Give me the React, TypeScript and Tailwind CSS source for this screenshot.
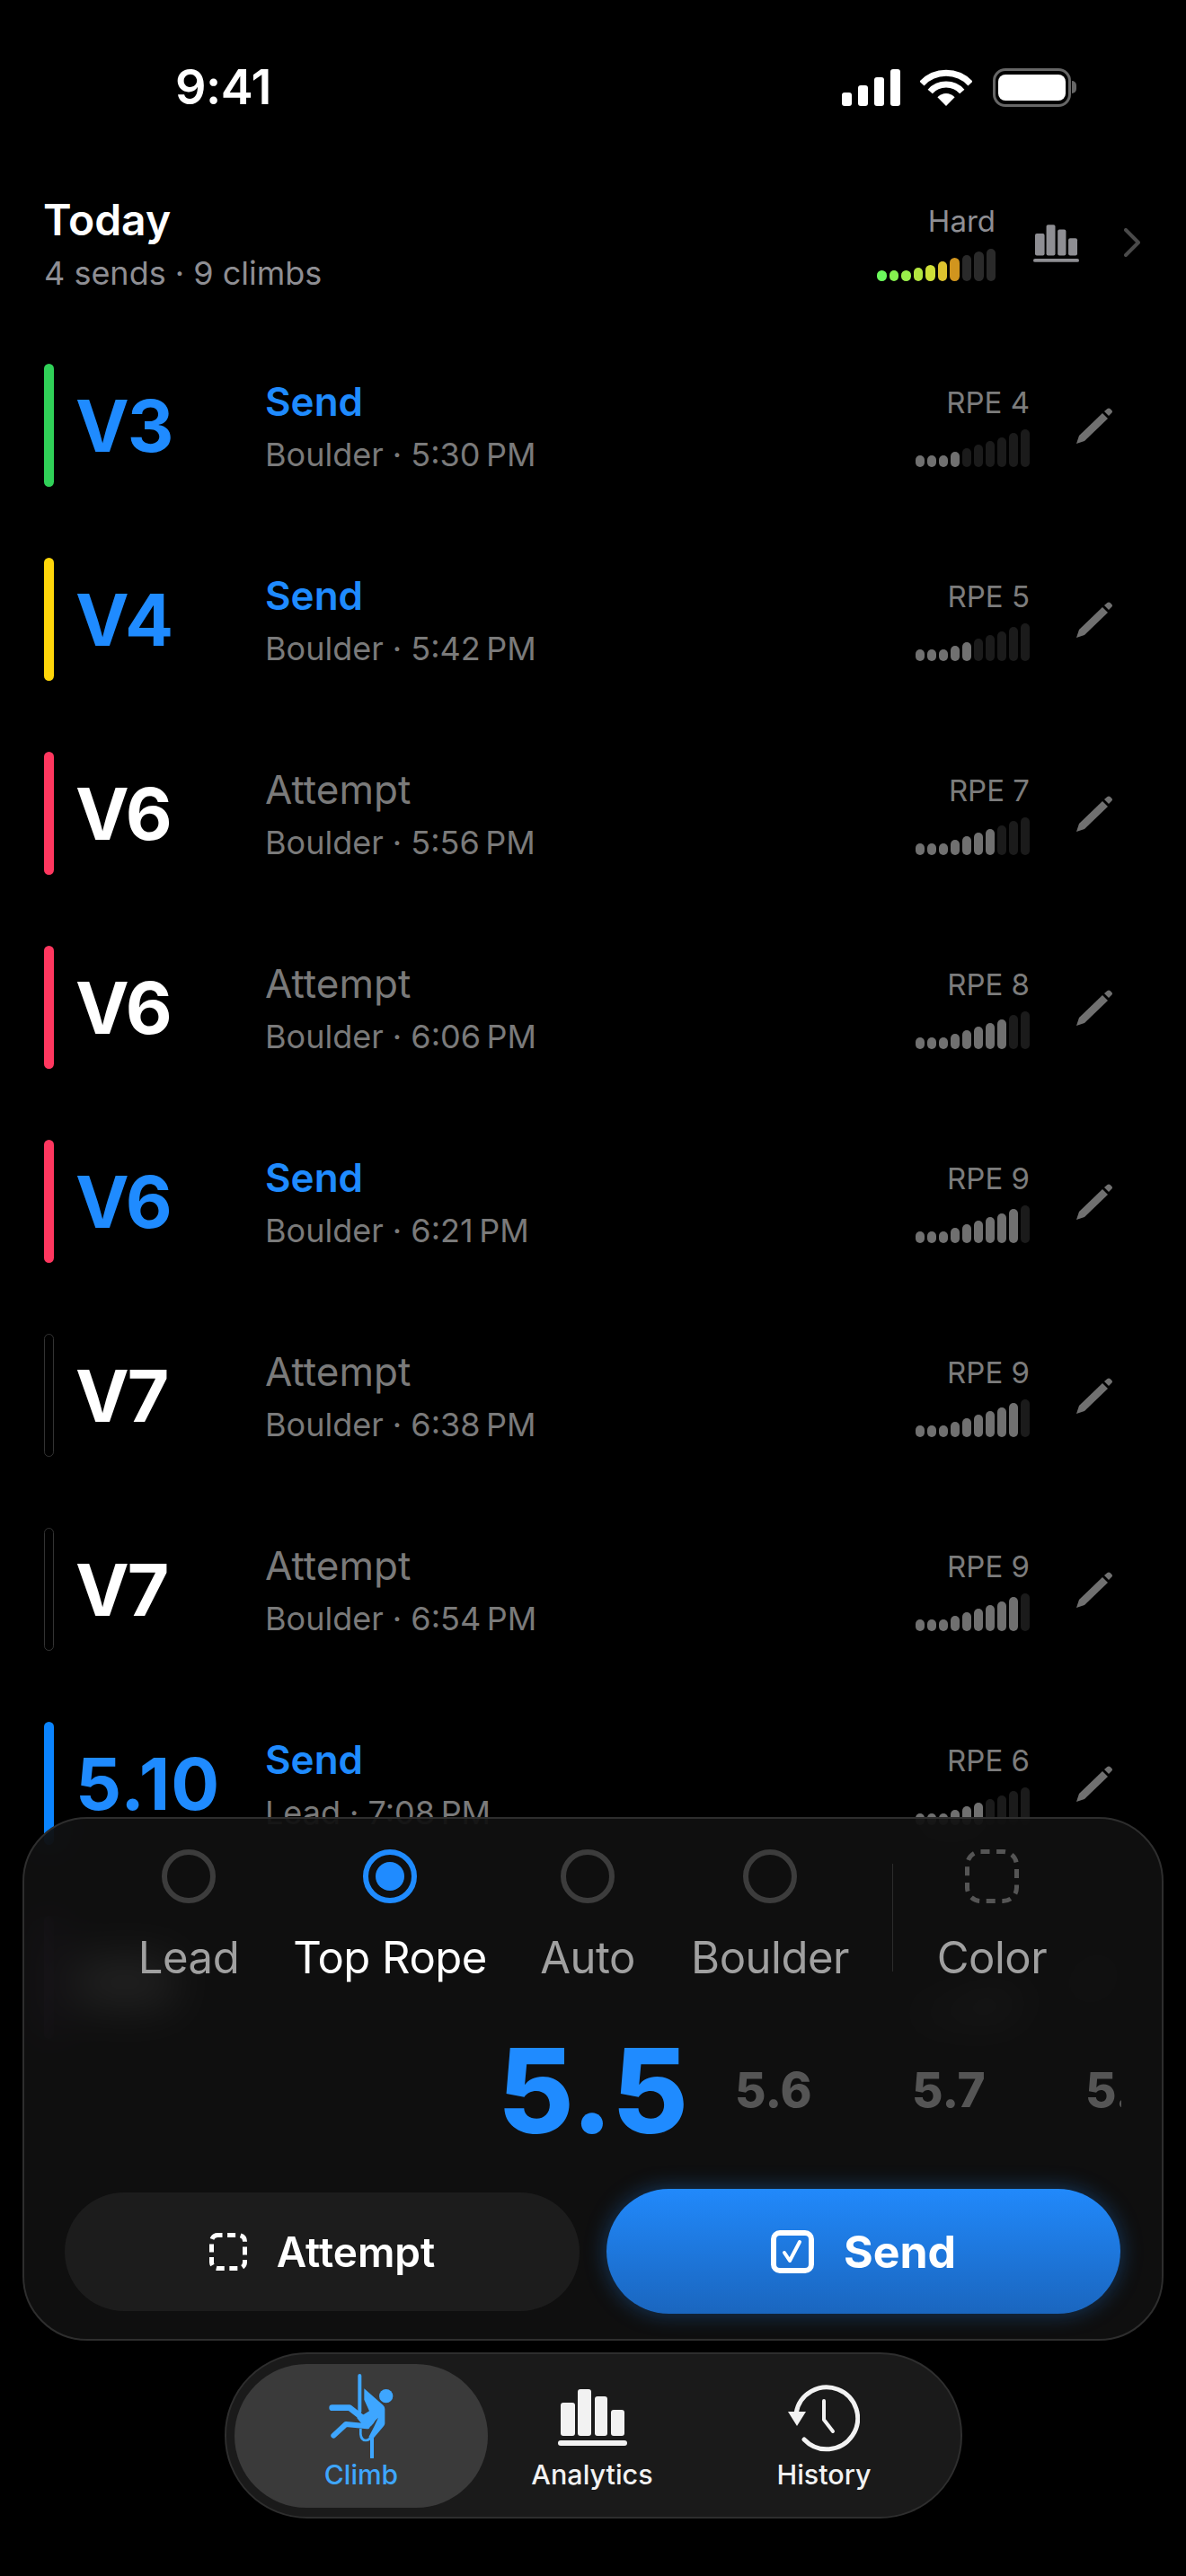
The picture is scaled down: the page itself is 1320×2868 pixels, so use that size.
import React from "react";

const heights = [13, 13, 13, 17, 21, 25, 29, 33, 38, 42];
const headerH = [12, 12, 12, 15, 18, 22, 26, 29, 33, 36];
const headerC = ["#6cf95c", "#86f14e", "#9aee4a", "#b3e63f", "#cfdf38", "#dcc22e", "#d1951e", "#2a2a2a", "#2a2a2a", "#2a2a2a"];

type Climb = { bar: string; grade: string; result: string; sub: string; rpe: number; outlined?: boolean };
const NB = "\u202F";
const climbs: Climb[] = [
  { bar: "bg-[#30d158]", grade: "V3", result: "Send", sub: `Boulder · 5:30${NB}PM`, rpe: 4 },
  { bar: "bg-[#ffd60a]", grade: "V4", result: "Send", sub: `Boulder · 5:42${NB}PM`, rpe: 5 },
  { bar: "bg-[#ff375f]", grade: "V6", result: "Attempt", sub: `Boulder · 5:56${NB}PM`, rpe: 7 },
  { bar: "bg-[#ff375f]", grade: "V6", result: "Attempt", sub: `Boulder · 6:06${NB}PM`, rpe: 8 },
  { bar: "bg-[#ff375f]", grade: "V6", result: "Send", sub: `Boulder · 6:21${NB}PM`, rpe: 9 },
  { bar: "bg-black", grade: "V7", result: "Attempt", sub: `Boulder · 6:38${NB}PM`, rpe: 9, outlined: true },
  { bar: "bg-black", grade: "V7", result: "Attempt", sub: `Boulder · 6:54${NB}PM`, rpe: 9, outlined: true },
  { bar: "bg-[#0a84ff]", grade: "5.10", result: "Send", sub: `Lead · 7:08${NB}PM`, rpe: 6 },
];

function Pencil() {
  return (
    <svg width="40" height="40" viewBox="0 0 40 40" className="shrink-0 text-[#707070]" fill="currentColor">
      <path d="M0 40 L3 31 L29 6 L35 12 L9 37 Z" />
      <path d="M31 4 L34.5 1 Q36 0 37.5 1 L39.5 3 Q40.5 4.5 39 6 L36 9 Z" />
    </svg>
  );
}

function Meter({ rpe }: { rpe: number }) {
  return (
    <div className="flex items-end gap-[3px]">
      {heights.map((h, i) => (
        <div
          key={i}
          className={`w-[10px] rounded-full ${i < rpe ? "bg-[#707070]" : "bg-[#1b1b1b]"}`}
          style={{ height: h }}
        />
      ))}
    </div>
  );
}

function Row({ c }: { c: Climb }) {
  const send = c.result === "Send";
  const long = c.grade.length > 2;
  return (
    <div className="flex h-[137px] shrink-0 items-center pl-[49px] pr-[82px]">
      <div className={`mr-[24px] h-[137px] w-[11px] shrink-0 rounded-full ${c.bar} ${c.outlined ? "border border-[#333333]" : ""}`} />
      <div className={`w-[211px] shrink-0 text-[80px] font-bold leading-none ${long ? "tracking-[1px]" : "tracking-[-2px]"} ${send ? "text-[#1f8bff]" : "text-white"}`}>
        {c.grade}
      </div>
      <div className="flex flex-1 flex-col gap-[11px] pt-[1px]">
        <div className={`text-[44px] leading-[52px] ${send ? "font-semibold text-[#1f8bff]" : "font-normal text-[#7a7a7a]"}`}>{c.result}</div>
        <div className="text-[36px] leading-[44px] text-[#7a7a7a]">{c.sub}</div>
      </div>
      <div className="flex flex-col items-end gap-[10px]">
        <div className="text-[33px] leading-[40px] text-[#7c7c7c]">RPE {c.rpe}</div>
        <Meter rpe={c.rpe} />
      </div>
      <div className="ml-[52px]">
        <Pencil />
      </div>
    </div>
  );
}

/* The row that sits behind the frosted panel: only its blurred shapes show. */
function GhostRow() {
  return (
    <div className="flex h-[137px] shrink-0 items-center pl-[49px] pr-[82px]">
      <div className="mr-[24px] h-[137px] w-[11px] shrink-0 rounded-full bg-[#7a4a9a]" />
      <div className="w-[211px] shrink-0">
        <div className="mt-[10px] h-[58px] w-[110px] rounded-[12px] bg-[#808080]" />
      </div>
      <div className="flex-1" />
      <div className="mt-[50px]">
        <Meter rpe={8} />
      </div>
      <div className="ml-[52px]">
        <Pencil />
      </div>
    </div>
  );
}

function Radio({ on }: { on?: boolean }) {
  return (
    <div className={`flex h-[60px] w-[60px] items-center justify-center rounded-full border-[6px] ${on ? "border-[#1f8bff]" : "border-[#3c3c3c]"}`}>
      {on && <div className="h-[32px] w-[32px] rounded-full bg-[#1f8bff]" />}
    </div>
  );
}

function TypeOption({ label, w, on }: { label: string; w: string; on?: boolean }) {
  return (
    <div className={`flex shrink-0 flex-col items-center ${w}`}>
      <Radio on={on} />
      <div className={`mt-[33px] whitespace-nowrap text-[49px] leading-[56px] tracking-[-0.5px] ${on ? "text-white" : "text-[#a0a0a0]"}`}>{label}</div>
    </div>
  );
}

function BarsIcon({ className }: { className?: string }) {
  return (
    <svg width="77" height="63" viewBox="0 0 77 63" fill="currentColor" className={className}>
      <rect x="3" y="15" width="16" height="37" rx="3" />
      <rect x="22" y="0" width="15" height="52" rx="3" />
      <rect x="41" y="8" width="14" height="44" rx="3" />
      <rect x="59" y="23" width="15" height="29" rx="3" />
      <rect x="0" y="57" width="77" height="6" rx="3" />
    </svg>
  );
}

export default function App() {
  return (
    <div className="relative h-[2868px] w-[1320px] overflow-hidden bg-black font-[family-name:Inter,sans-serif]">
      {/* status bar */}
      <div className="flex h-[216px] items-start justify-between pl-[195px] pr-[122px] pt-[72px]">
        <div className="text-[54px] font-semibold leading-[50px] tracking-[-0.5px] text-white">9:41</div>
        <div className="flex h-[50px] items-center">
          <div className="flex h-[41px] items-end gap-[7px]">
            <div className="h-[15px] w-[11px] rounded-[3px] bg-white" />
            <div className="h-[23px] w-[11px] rounded-[3px] bg-white" />
            <div className="h-[32px] w-[11px] rounded-[3px] bg-white" />
            <div className="h-[41px] w-[11px] rounded-[3px] bg-white" />
          </div>
          <svg width="58" height="41" viewBox="0 0 58 41" className="ml-[22px]" fill="none">
            <path d="M2 16 A37 37 0 0 1 56 16" stroke="#fff" strokeWidth="7" />
            <path d="M11.2 25 A24 24 0 0 1 46.8 25" stroke="#fff" strokeWidth="7" />
            <path d="M29 41 L19.4 31.3 A13 13 0 0 1 38.6 31.3 Z" fill="#fff" />
          </svg>
          <div className="ml-[23px] flex items-center">
            <div className="flex h-[43px] w-[87px] items-center justify-center rounded-[14px] border-[3px] border-[#666666]">
              <div className="h-[29px] w-[75px] rounded-[8px] bg-white" />
            </div>
            <div className="ml-[1px] h-[14px] w-[5px] rounded-r-full bg-[#666666]" />
          </div>
        </div>
      </div>

      {/* header */}
      <div className="flex h-[189px] items-start pl-[48px] pr-[51px]">
        <div className="flex-1">
          <div className="text-[48px] font-semibold leading-[58px] text-white">Today</div>
          <div className="mt-[8px] pl-[1px] text-[36px] leading-[44px] text-[#8e8e93]">4 sends · 9 climbs</div>
        </div>
        <div className="flex flex-col items-end pt-[10px]">
          <div className="text-[33px] leading-[40px] text-[#8e8e93]">Hard</div>
          <div className="mt-[11px] flex items-end gap-[3px]">
            {headerH.map((h, i) => (
              <div key={i} className="w-[10.5px] rounded-full" style={{ height: h, backgroundColor: headerC[i] }} />
            ))}
          </div>
        </div>
        <BarsIcon className="ml-[42px] mt-[34px] h-[42px] w-[51px] text-[#8e8e93]" />
        <svg width="18" height="32" viewBox="0 0 18 32" fill="none" className="ml-[50px] mt-[38px]">
          <path d="M2 2 L16 16 L2 30" stroke="#4a4a4a" strokeWidth="4" strokeLinecap="round" strokeLinejoin="round" />
        </svg>
      </div>

      {/* list */}
      <div className="flex flex-col gap-[79px]">
        {climbs.map((c, i) => (
          <Row key={i} c={c} />
        ))}
        <GhostRow />
      </div>

      {/* control panel */}
      <div className="absolute left-[25px] top-[2023px] h-[583px] w-[1270px] rounded-[72px] border-2 border-[#2e2e2e] bg-[#111111]/[0.86] backdrop-blur-[24px]">
        <div className="relative flex pl-[83px] pt-[34px]">
          <TypeOption label="Lead" w="w-[200px]" />
          <TypeOption label="Top Rope" w="w-[248px]" on />
          <TypeOption label="Auto" w="w-[192px]" />
          <TypeOption label="Boulder" w="w-[214px]" />
          <div className="ml-[29px] mt-[16px] h-[120px] w-[1px] bg-[#2c2c2c]" />
          <div className="flex w-[220px] shrink-0 flex-col items-center">
            <svg width="60" height="60" viewBox="0 0 60 60" fill="none">
              <rect x="2.5" y="2.5" width="55" height="55" rx="15" stroke="#555555" strokeWidth="5" strokeDasharray="10 7.6" />
            </svg>
            <div className="mt-[33px] text-[49px] leading-[56px] tracking-[-0.5px] text-[#a0a0a0]">Color</div>
          </div>
        </div>

        <div className="ml-[45px] mt-[37px] flex h-[166px] w-[1176px] items-center overflow-hidden pl-[482px]">
          <div className="w-[264px] shrink-0 text-[130px] font-extrabold leading-none text-[#1f8bff]">5.5</div>
          <div className="w-[197px] shrink-0 pb-[2px] text-[53px] font-extrabold leading-none text-[#555555]">5.6</div>
          <div className="w-[193px] shrink-0 pb-[2px] text-[53px] font-extrabold leading-none text-[#555555]">5.7</div>
          <div className="shrink-0 pb-[2px] text-[53px] font-extrabold leading-none text-[#555555]">5.8</div>
        </div>

        <div className="ml-[45px] mt-[26px] flex items-center gap-[30px]">
          <div className="flex h-[132px] w-[573px] items-center justify-center gap-[33px] rounded-[66px] bg-[#1c1c1c]">
            <svg width="42" height="42" viewBox="0 0 42 42" fill="none">
              <rect x="2.5" y="2.5" width="37" height="37" rx="7" stroke="#fff" strokeWidth="5" strokeDasharray="9 5.6" strokeDashoffset="4" />
            </svg>
            <div className="text-[46px] font-semibold leading-none text-white">Attempt</div>
          </div>
          <div className="flex h-[139px] w-[572px] items-center justify-center gap-[33px] rounded-[70px] bg-gradient-to-b from-[#2189fb] to-[#1a66bf] shadow-[0_0_24px_rgba(33,137,251,0.35)]">
            <svg width="48" height="48" viewBox="0 0 48 48" fill="none">
              <rect x="3" y="3" width="42" height="42" rx="7" stroke="#fff" strokeWidth="6" />
              <path d="M15 25 L21 34 L32 13" stroke="#fff" strokeWidth="4" strokeLinecap="round" strokeLinejoin="round" />
            </svg>
            <div className="text-[50px] font-bold leading-none text-white">Send</div>
          </div>
        </div>
      </div>

      {/* tab bar */}
      <div className="absolute left-[250px] top-[2619px] flex h-[185px] w-[821px] rounded-[92px] border-2 border-[#2e2e2e] bg-[#1a1a1a] pl-[9px] pt-[11px]">
        <div className="flex h-[160px] w-[282px] flex-col items-center rounded-[80px] bg-[#3a3a3a] pt-[8px]">
          <svg width="84" height="97" viewBox="60 30 250 291" fill="none">
            <path d="M180 45 V165" stroke="#3ea6ff" strokeWidth="12" strokeLinecap="round" />
            <path d="M221 245 V318" stroke="#3ea6ff" strokeWidth="12" strokeLinecap="round" />
            <circle cx="268" cy="113" r="23" fill="#3ea6ff" />
            <path d="M195 88 L258 143 Q264 148 264 156 V205 Q264 210 258 216 L225 255 L210 250 L228 215 L242 185 L232 195 Q220 218 200 222 L170 185 L188 178 L212 163 L195 125 Z" fill="#3ea6ff" />
            <path d="M88 152 H146 L192 188" stroke="#3ea6ff" strokeWidth="20" strokeLinecap="round" strokeLinejoin="round" />
            <path d="M93 245 L134 207 L205 214" stroke="#3ea6ff" strokeWidth="18" strokeLinecap="round" strokeLinejoin="round" />
            <path d="M183 222 V240 Q185 261 200 261 Q214 261 221 243" stroke="#3ea6ff" strokeWidth="8" />
          </svg>
          <div className="text-[30px] font-medium leading-[36px] text-[#3ea6ff]">Climb</div>
        </div>
        <div className="flex w-[232px] flex-col items-center pt-[8px]">
          <div className="flex h-[97px] items-end pb-[14px]">
            <BarsIcon className="text-[#f2f2f2]" />
          </div>
          <div className="text-[30.5px] font-medium leading-[36px] text-[#f2f2f2]">Analytics</div>
        </div>
        <div className="flex w-[284px] flex-col items-center pt-[8px]">
          <svg width="80" height="97" viewBox="0 0 80 97" fill="none">
            <path d="M9 47 A34.5 34.5 0 1 1 18 76" stroke="#f2f2f2" strokeWidth="5" strokeLinecap="round" />
            <path d="M0 45 H20 L10 61 Z" fill="#f2f2f2" />
            <path d="M40 33 V54 L50 67" stroke="#f2f2f2" strokeWidth="4" strokeLinecap="round" strokeLinejoin="round" />
          </svg>
          <div className="text-[30.5px] font-medium leading-[36px] text-[#f2f2f2]">History</div>
        </div>
      </div>
    </div>
  );
}
